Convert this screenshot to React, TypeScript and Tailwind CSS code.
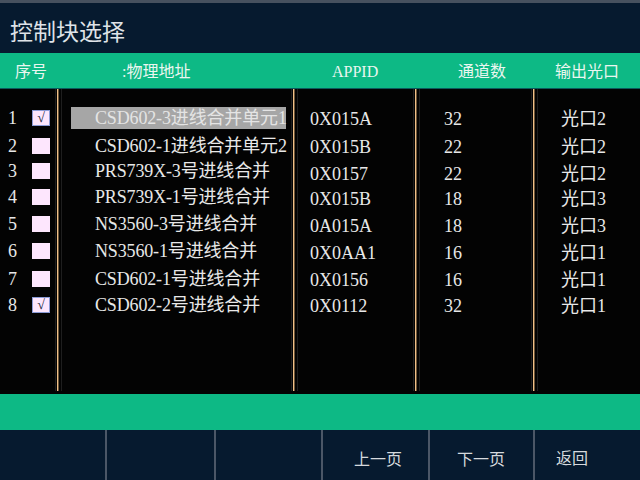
const rows = [
  { no: 1, on: true, name: 'CSD602-3进线合并单元1', appid: '0X015A', ch: '32', port: '光口2' },
  { no: 2, on: false, name: 'CSD602-1进线合并单元2', appid: '0X015B', ch: '22', port: '光口2' },
  { no: 3, on: false, name: 'PRS739X-3号进线合并', appid: '0X0157', ch: '22', port: '光口2' },
  { no: 4, on: false, name: 'PRS739X-1号进线合并', appid: '0X015B', ch: '18', port: '光口3' },
  { no: 5, on: false, name: 'NS3560-3号进线合并', appid: '0A015A', ch: '18', port: '光口3' },
  { no: 6, on: false, name: 'NS3560-1号进线合并', appid: '0X0AA1', ch: '16', port: '光口1' },
  { no: 7, on: false, name: 'CSD602-1号进线合并', appid: '0X0156', ch: '16', port: '光口1' },
  { no: 8, on: true, name: 'CSD602-2号进线合并', appid: '0X0112', ch: '32', port: '光口1' },
];

// row heights differ a bit between the left and right block of columns
const leftH = ['h-[28px]', 'h-[27px]', 'h-[24px]', 'h-[28px]', 'h-[26px]', 'h-[28px]', 'h-[27px]', 'h-[26px]'];
const rightH = ['h-[28px]', 'h-[28px]', 'h-[25px]', 'h-[26px]', 'h-[27px]', 'h-[27px]', 'h-[27px]', 'h-[26px]'];

const serif = "font-['Liberation_Serif','Noto_Sans_CJK_SC',serif]";
const sans = "font-['Noto_Sans_CJK_SC','Liberation_Sans',sans-serif]";

function Sep() {
  return (
    <div className="flex w-[7px] shrink-0 mb-[3px]">
      <div className="w-px bg-[#1e1e1e]" />
      <div className="w-px" />
      <div className="w-px bg-[#f0c088]" />
      <div className="w-px bg-[#6e5638]" />
      <div className="w-[2px]" />
      <div className="w-px bg-[#1e1e1e]" />
    </div>
  );
}

function NavSep() {
  return <div className="w-[2px] shrink-0 bg-[#4b5767]" />;
}

export default function App() {
  return (
    <div className={`w-[640px] h-[480px] flex flex-col bg-black overflow-hidden ${serif}`}>
      <div className="h-[3px] bg-[#46515f]" />

      {/* title */}
      <div className="h-[50px] bg-[#061a2f] flex items-center pl-[10px] pt-[4px]">
        <span className={`${sans} text-[23px] leading-none text-[#dfe3e8]`}>控制块选择</span>
      </div>

      {/* header */}
      <div className="h-[36px] bg-[#0db985] border-b border-[#0a5a5c] flex items-center text-[16px] text-[#eaf6f0] pt-[2px]">
        <div className="w-[62px] pl-[15px]">序号</div>
        <div className="w-[236px] pl-[60px]">:物理地址</div>
        <div className="w-[122px] pl-[34px]">APPID</div>
        <div className="w-[118px] pl-[38px]">通道数</div>
        <div className="flex-1 pl-[17px]">输出光口</div>
      </div>

      {/* table */}
      <div className="h-[305px] flex bg-[#030303] text-[18px] text-[#e8e8e8] leading-none">
        <div className="w-[55px] shrink-0 pt-[15px]">
          {rows.map((r, i) => (
            <div key={r.no} className={`${leftH[i]} flex items-center`}>
              <span className="w-[32px] pl-[8px]">{r.no}</span>
              {r.on ? (
                <span className="w-[18px] h-[16px] bg-[#fde6fd] border border-[#8b9bd6] flex items-center justify-center text-[14px] text-[#1a1f3a]">
                  √
                </span>
              ) : (
                <span className="w-[18px] h-[16px] bg-[#fde6fd]" />
              )}
            </div>
          ))}
        </div>
        <Sep />
        <div className="w-[229px] shrink-0 pt-[15px] tracking-[-0.15px]">
          {rows.map((r, i) => (
            <div key={r.no} className={`${leftH[i]} flex items-center`}>
              <div
                className={`ml-[9px] w-[215px] h-[22px] pl-[24px] flex items-center whitespace-nowrap ${
                  i === 0 ? 'bg-[#a6a6a6] text-[#e4e4e4]' : ''
                }`}
              >
                {r.name}
              </div>
            </div>
          ))}
        </div>
        <Sep />
        <div className="w-[115px] shrink-0 pt-[16px]">
          {rows.map((r, i) => (
            <div key={r.no} className={`${rightH[i]} flex items-center pl-[12px]`}>
              {r.appid}
            </div>
          ))}
        </div>
        <Sep />
        <div className="w-[111px] shrink-0 pt-[16px]">
          {rows.map((r, i) => (
            <div key={r.no} className={`${rightH[i]} flex items-center pl-[24px]`}>
              {r.ch}
            </div>
          ))}
        </div>
        <Sep />
        <div className="flex-1 pt-[16px]">
          {rows.map((r, i) => (
            <div key={r.no} className={`${rightH[i]} flex items-center pl-[23px]`}>
              {r.port}
            </div>
          ))}
        </div>
      </div>

      <div className="h-[36px] bg-[#0db985]" />

      {/* bottom buttons */}
      <div className={`h-[50px] bg-[#061a2f] flex text-[16px] text-[#d6dade] ${sans}`}>
        <div className="w-[105px]" />
        <NavSep />
        <div className="w-[107px]" />
        <NavSep />
        <div className="w-[105px]" />
        <NavSep />
        <div className="w-[105px] flex items-center pl-[31px] pt-[6px]">上一页</div>
        <NavSep />
        <div className="w-[103px] flex items-center pl-[27px] pt-[6px]">下一页</div>
        <NavSep />
        <div className="flex-1 flex items-center pl-[21px] pt-[4px]">返回</div>
      </div>
    </div>
  );
}
